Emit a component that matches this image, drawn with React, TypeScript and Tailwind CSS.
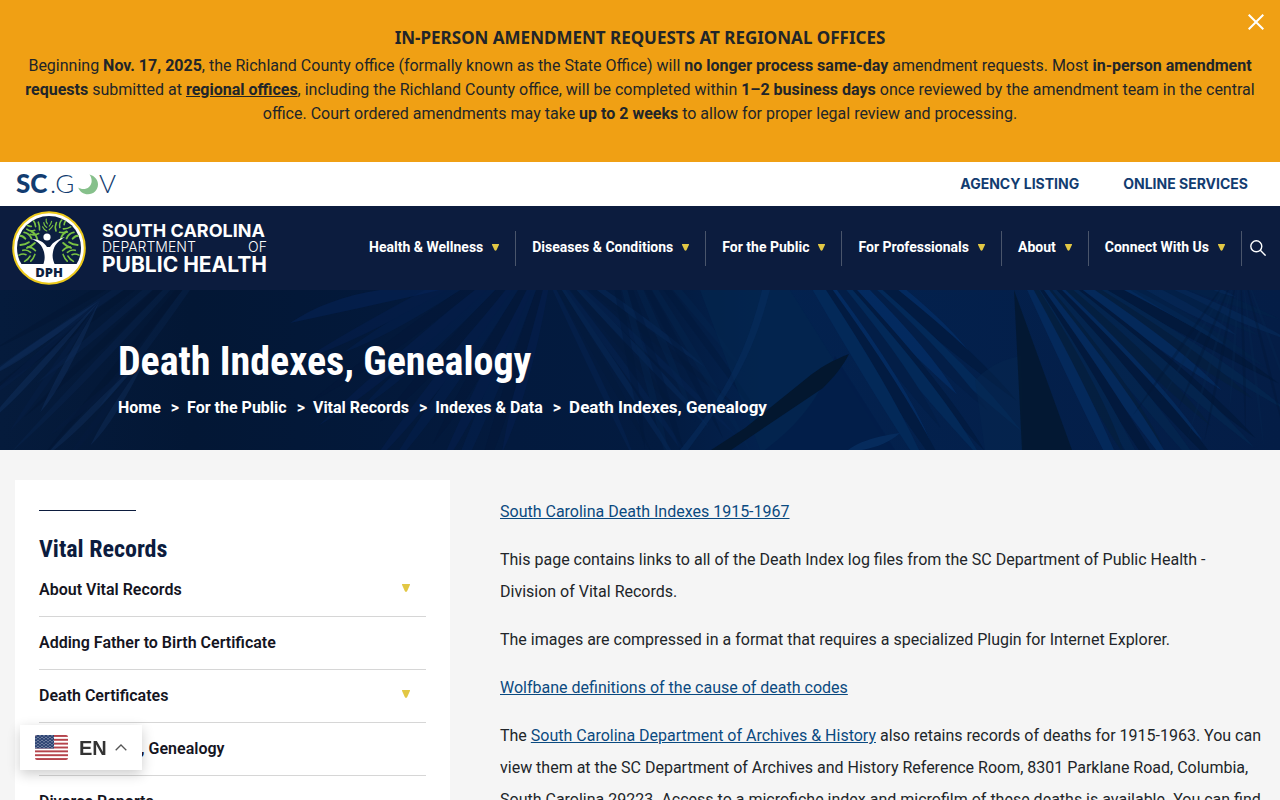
import React, { useState } from 'react';

interface NavItem {
  label: string;
  hasMenu?: boolean;
}

interface FanProps {
  x: number;
  y: number;
  from: number;
  to: number;
  count: number;
  length: number;
  width: number;
  colors: string[];
  opacity?: number;
}

const NAV_ITEMS: string[] = [
  'Health & Wellness',
  'Diseases & Conditions',
  'For the Public',
  'For Professionals',
  'About',
  'Connect With Us',
];

const BREADCRUMBS: string[] = ['Home', 'For the Public', 'Vital Records', 'Indexes & Data'];

const SIDE_ITEMS: NavItem[] = [
  { label: 'About Vital Records', hasMenu: true },
  { label: 'Adding Father to Birth Certificate' },
  { label: 'Death Certificates', hasMenu: true },
  { label: 'Death Indexes, Genealogy' },
  { label: 'Divorce Reports' },
];

const Caret: React.FC<{ className?: string }> = ({ className }) => (
  <svg viewBox="0 0 8 8" className={className} aria-hidden="true">
    <path d="M.5 0h7c.5 0 .7.5.4 1L5.2 6.9c-.6 1.2-1.8 1.2-2.4 0L.1 1C-.2.5 0 0 .5 0Z" fill="#e2c744" />
  </svg>
);

// Palm blades spreading from one point, angles in degrees
const Fan: React.FC<FanProps> = ({ x, y, from, to, count, length, width, colors, opacity = 1 }) => (
  <g opacity={opacity}>
    {Array.from({ length: count }, (_, i) => {
      const angle = from + ((to - from) * i) / Math.max(count - 1, 1) + Math.sin(i * 4.1) * 0.6;
      const len = length * (0.75 + 0.25 * Math.abs(Math.sin(i * 2.3)));
      return (
        <path
          key={i}
          transform={`translate(${x} ${y}) rotate(${angle})`}
          d={`M0 0 Q${len * 0.7} ${-width} ${len} 0 Q${len * 0.7} ${width * 0.4} 0 0`}
          fill={colors[i % colors.length]}
        />
      );
    })}
  </g>
);

const HeroBackground: React.FC = () => (
  <svg
    viewBox="0 0 1280 160"
    preserveAspectRatio="xMidYMid slice"
    className="absolute inset-0 h-full w-full"
    aria-hidden="true"
  >
    <defs>
      <linearGradient id="heroBase">
        <stop offset="0" stopColor="#051b3c" />
        <stop offset=".15" stopColor="#031735" />
        <stop offset=".4" stopColor="#031a3e" />
        <stop offset=".52" stopColor="#031b40" />
        <stop offset=".6" stopColor="#03224f" />
        <stop offset="1" stopColor="#041d46" />
      </linearGradient>
    </defs>
    <rect width="1280" height="160" fill="url(#heroBase)" />

    {/* left leaves */}
    <Fan x={250} y={-90} from={126} to={150} count={8} length={350} width={10} colors={['#0a2752', '#03142f']} opacity={0.35} />
    <Fan x={100} y={10} from={118} to={146} count={5} length={170} width={9} colors={['#133465', '#071f48']} opacity={0.4} />
    <Fan x={150} y={60} from={122} to={140} count={4} length={150} width={9} colors={['#12315f', '#061b3f']} opacity={0.4} />

    {/* centre */}
    <Fan x={560} y={-70} from={104} to={152} count={13} length={320} width={16} colors={['#051f50', '#031738', '#04204f']} opacity={0.5} />
    <path d="M290 33c24-16 54-28 90-33h60c-52 12-100 22-150 33Z" fill="#06245a" opacity=".5" />
    <Fan x={530} y={-50} from={36} to={64} count={9} length={290} width={9} colors={['#072a5a', '#031a3c', '#052352']} opacity={0.5} />
    <Fan x={600} y={-90} from={50} to={80} count={8} length={300} width={10} colors={['#052650', '#02183a']} opacity={0.4} />

    {/* right of centre */}
    <path d="M700 0h90l100 160H760Z" fill="#04264f" opacity=".6" />
    <path d="M770 0c-14 52-28 88-82 160h-8c48-58 68-104 82-160Z" fill="#072d60" opacity=".5" />
    <path d="M835 66l60 94H765c40-30 58-60 70-94Z" fill="#021d49" opacity=".8" />
    <Fan x={750} y={-110} from={38} to={59} count={11} length={370} width={20} colors={['#042c62', '#021b40', '#032a5a', '#031e47']} opacity={0.9} />
    <path d="M849 64c-16 6-30 14-42 24l-62 50-34 22h20l92-62c12-12 20-22 26-34Z" fill="#03172f" />
    <path d="M900 143c-28 4-43 10-52 17h14c16-3 28-8 38-17Z" fill="#062b5c" />

    {/* trunk and right fan */}
    <path d="M975 90q20-20 46-24l2 94h-38Z" fill="#062850" opacity=".45" />
    <path d="M1014 0l58 160h-50Z" fill="#03182f" opacity=".85" />
    <Fan x={1000} y={-60} from={27} to={64} count={17} length={340} width={16} colors={['#052b5e', '#02193b', '#04264f', '#051f3f']} opacity={0.85} />
    <Fan x={1050} y={-50} from={17} to={30} count={6} length={260} width={13} colors={['#062b5a', '#032248']} opacity={0.6} />
    <Fan x={1240} y={-30} from={70} to={125} count={10} length={190} width={4} colors={['#072850', '#021633']} opacity={0.3} />
  </svg>
);

const Frond: React.FC<{ transform: string }> = ({ transform }) => (
  <g transform={transform} fill="none" stroke="#79c143" strokeLinecap="round" strokeWidth="1.9">
    <path d="M5-2Q7-7 12-9M11-2Q14-7 19-7M17-1Q20-4 25-3M7 2Q10 6 14 8M13 2Q16 5 21 6" />
  </g>
);

const DphSeal: React.FC = () => (
  <svg viewBox="0 0 74 74" className="h-[74px] w-[74px] shrink-0" role="img" aria-label="DPH">
    <defs>
      <clipPath id="sealClip">
        <circle cx="37" cy="37" r="32" />
      </clipPath>
    </defs>
    <circle cx="37" cy="37" r="35.8" fill="#fff" stroke="#edc91b" strokeWidth="2" />
    <g clipPath="url(#sealClip)">
      <rect width="74" height="53" fill="#0c1f40" />
      <rect y="53" width="74" height="21" fill="#fff" />
      <Frond transform="translate(36 23) rotate(-90) scale(.6)" />
      <Frond transform="translate(31 24) rotate(-140) scale(.85)" />
      <Frond transform="translate(42 24) rotate(-42) scale(.85)" />
      <Frond transform="translate(30 31) scale(-1 1) rotate(-8)" />
      <Frond transform="translate(44 31) rotate(-8)" />
      <Frond transform="translate(28 40) scale(-1 1) rotate(18) scale(.85)" />
      <Frond transform="translate(46 40) rotate(18) scale(.85)" />
      <path d="M19 28c8 0 13 3 16 8h3c3-5 8-8 15-10-7 4-11 8-12 15-1 5 0 8 2 13H31c2-5 2-8 1-13-2-7-6-11-13-13Z" fill="#fff" />
      <circle cx="35" cy="26" r="3.6" fill="#fff" />
    </g>
    <text x="37" y="66" textAnchor="middle" fontSize="13" fontWeight="800" fontFamily="'Open Sans', sans-serif" fill="#0c1f40">
      DPH
    </text>
  </svg>
);

const ScGovLogo: React.FC = () => (
  <svg viewBox="0 -8 102 40" className="h-10 w-[102px]" role="img" aria-label="SC.GOV">
    <g fontFamily="Lato, sans-serif" fontSize="26" fill="#123c70">
      <text x="0" y="21" fontWeight="900">SC</text>
      <text x="34" y="21" fontWeight="300">.G</text>
      <text x="83" y="21" fontWeight="300">V</text>
    </g>
    <path d="M73.5 2.5C79 4 82 8 82 12.5 82 18 77.5 22.3 72 22.3 67.5 22.3 63.5 19.5 62.3 15.5 65 17.5 70 17.7 73 15 76.5 12 76.5 6.5 73.5 2.5Z" fill="#86c08b" />
  </svg>
);

const UsFlag: React.FC = () => (
  <svg viewBox="0 0 33 25" className="h-[25px] w-[33px]" aria-hidden="true">
    <defs>
      <clipPath id="flagClip">
        <rect width="33" height="25" rx="2" />
      </clipPath>
      <pattern id="stars" width="4" height="3" patternUnits="userSpaceOnUse">
        <circle cx="1" cy=".8" r=".5" fill="#fff" />
        <circle cx="3" cy="2.3" r=".5" fill="#fff" />
      </pattern>
    </defs>
    <g clipPath="url(#flagClip)">
      <rect width="33" height="25" fill="#fff" />
      {Array.from({ length: 7 }, (_, i) => (
        <rect key={i} y={(i * 50) / 13} width="33" height={25 / 13} fill="#b5444c" />
      ))}
      <rect width="19" height="13.5" fill="#2b4272" />
      <rect width="19" height="13.5" fill="url(#stars)" />
    </g>
  </svg>
);

const App: React.FC = () => {
  const [showAlert, setShowAlert] = useState(true);

  return (
    <div className="min-h-screen bg-[#f5f5f5] font-[Roboto,sans-serif] text-base text-[#212529]">
      {showAlert && (
        <section className="relative bg-[#f0a014] px-5 pt-6 pb-9 text-center">
          <h2 className="mb-0.5 font-['Noto_Sans','Open_Sans',sans-serif] text-[17px] leading-7 font-bold">
            IN-PERSON AMENDMENT REQUESTS AT REGIONAL OFFICES
          </h2>
          <p className="leading-6">
            Beginning <b>Nov. 17, 2025</b>, the Richland County office (formally known as the State Office) will{' '}
            <b>no longer process same-day</b> amendment requests. Most <b>in-person amendment requests</b> submitted at{' '}
            <a href="#offices" className="font-bold underline">regional offices</a>, including the Richland County
            office, will be completed within <b>1–2 business days</b> once reviewed by the amendment team in the central
            office. Court ordered amendments may take <b>up to 2 weeks</b> to allow for proper legal review and
            processing.
          </p>
          <button
            type="button"
            aria-label="Close"
            onClick={() => setShowAlert(false)}
            className="absolute top-3.5 right-4 h-4 w-4"
          >
            <svg viewBox="0 0 16 16" className="h-4 w-4" stroke="#fff" strokeWidth="2">
              <path d="M.7.7l14.6 14.6M15.3.7L.7 15.3" />
            </svg>
          </button>
        </section>
      )}

      <div className="flex h-11 items-center justify-between bg-white pr-8 pl-4">
        <a href="#scgov">
          <ScGovLogo />
        </a>
        <div className="flex gap-11 font-[Inter,sans-serif] text-sm font-bold text-[#123c70]">
          <a href="#agencies">AGENCY LISTING</a>
          <a href="#services">ONLINE SERVICES</a>
        </div>
      </div>

      <header className="flex h-21 items-center justify-between bg-[#0c1c3e] pr-3.5 pl-3">
        <a href="#home" className="flex items-center gap-4 text-white">
          <DphSeal />
          <span className="flex flex-col pt-0.5 font-[Inter,sans-serif] whitespace-nowrap">
            <span className="text-lg leading-4 font-bold">SOUTH CAROLINA</span>
            <span className="flex justify-between text-sm leading-4 font-light">
              <span>DEPARTMENT</span>
              <span>OF</span>
            </span>
            <span className="text-[21px] leading-5 font-bold">PUBLIC HEALTH</span>
          </span>
        </a>
        <nav className="flex items-center">
          {NAV_ITEMS.map((label) => (
            <button
              key={label}
              type="button"
              className="flex h-[35px] items-center gap-[9px] border-r border-[#4a556b] px-4 pb-0.5 text-sm font-bold whitespace-nowrap text-white"
            >
              {label}
              <Caret className="h-[7px] w-[7px]" />
            </button>
          ))}
          <button type="button" aria-label="Search" className="ml-2">
            <svg viewBox="0 0 16 16" className="h-4 w-4" fill="none" stroke="#fff" strokeWidth="1.4">
              <circle cx="6.3" cy="6.3" r="5.5" />
              <path d="M10.3 10.3l5.3 5.3" />
            </svg>
          </button>
        </nav>
      </header>

      <section className="relative overflow-hidden bg-[#03183b]">
        <HeroBackground />
        <div className="relative px-[118px] pt-12 pb-[30px] text-white">
          <h1 className="font-['Roboto_Condensed',Roboto,sans-serif] text-[40px] leading-12 font-bold">
            Death Indexes, Genealogy
          </h1>
          <nav className="mt-[9px] flex items-baseline leading-6 font-bold">
            {BREADCRUMBS.map((crumb) => (
              <React.Fragment key={crumb}>
                <a href="#crumb">{crumb}</a>
                <span className="mr-2 ml-2.5">&gt;</span>
              </React.Fragment>
            ))}
            <span className="text-[17px]">Death Indexes, Genealogy</span>
          </nav>
        </div>
      </section>

      <div className="flex items-start gap-[50px] px-[15px] pt-[30px]">
        <aside className="w-[435px] shrink-0 bg-white px-6 pt-[30px] pb-8">
          <div className="w-1/4 border-t border-[#0c1c3e]" />
          <h2 className="mt-5 font-['Roboto_Condensed',Roboto,sans-serif] text-2xl leading-9 font-bold text-[#0c1c3e]">
            Vital Records
          </h2>
          <ul>
            {SIDE_ITEMS.map((item, i) => (
              <li
                key={item.label}
                className={`flex items-center justify-between border-b border-[#d6d6d6] pr-4 pb-[14px] ${i === 0 ? 'pt-[11px]' : 'pt-[14px]'}`}
              >
                <a href="#section" className="leading-6 font-semibold text-[#15151f]">{item.label}</a>
                {item.hasMenu && (
                  <button type="button" aria-label={`Expand ${item.label}`} className="pb-1">
                    <Caret className="h-2 w-2" />
                  </button>
                )}
              </li>
            ))}
          </ul>
        </aside>

        <main className="flex flex-1 flex-col gap-4 pt-4 leading-8">
          <p>
            <a href="#indexes" className="text-[#0b4a80] underline">South Carolina Death Indexes 1915-1967</a>
          </p>
          <p>
            This page contains links to all of the Death Index log files from the SC Department of Public Health -
            Division of Vital Records.
          </p>
          <p>The images are compressed in a format that requires a specialized Plugin for Internet Explorer.</p>
          <p>
            <a href="#codes" className="text-[#0b4a80] underline">Wolfbane definitions of the cause of death codes</a>
          </p>
          <p>
            The <a href="#archives" className="text-[#0b4a80] underline">South Carolina Department of Archives &amp; History</a>{' '}
            also retains records of deaths for 1915-1963. You can view them at the SC Department of Archives and History
            Reference Room, 8301 Parklane Road, Columbia, South Carolina 29223. Access to a microfiche index and
            microfilm of these deaths is available. You can find
          </p>
        </main>
      </div>

      <button
        type="button"
        className="fixed bottom-[30px] left-5 flex h-[45px] items-center bg-white px-[15px] shadow-[0_4px_12px_rgba(0,0,0,0.2)]"
      >
        <UsFlag />
        <span className="ml-[11px] font-['Liberation_Sans',sans-serif] text-xl font-bold text-[#333]">EN</span>
        <svg viewBox="0 0 12 7" className="ml-2 h-[7px] w-3" fill="none" stroke="#555" strokeWidth="1.3">
          <path d="M.7 6.3L6 1l5.3 5.3" />
        </svg>
      </button>
    </div>
  );
};

export default App;
